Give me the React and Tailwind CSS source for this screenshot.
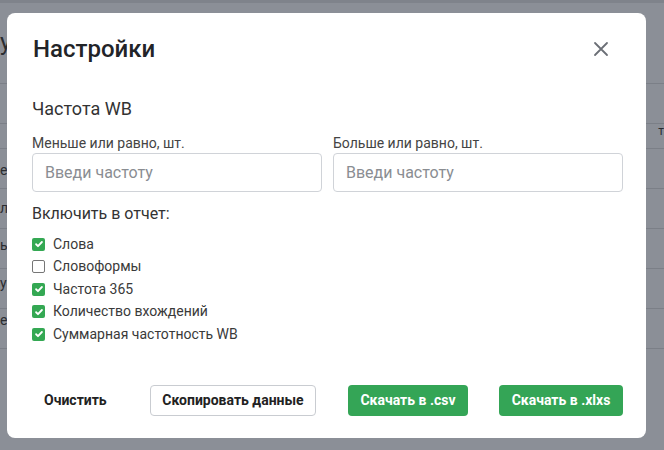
import React, { useState } from "react";

const rows = [
  { id: "words", label: "Слова", on: true },
  { id: "forms", label: "Словоформы", on: false },
  { id: "f365", label: "Частота 365", on: true },
  { id: "count", label: "Количество вхождений", on: true },
  { id: "sum", label: "Суммарная частотность WB", on: true },
];

function Check({ checked, onChange, label }) {
  return (
    <label className="flex items-center h-[22.5px] cursor-pointer">
      <span
        onClick={onChange}
        className={`w-[13px] h-[13px] rounded-[2px] flex items-center justify-center ${
          checked ? "bg-[#34a853]" : "border border-[#767676] bg-white"
        }`}
      >
        {checked && (
          <svg viewBox="0 0 12 12" className="w-[10px] h-[10px]" fill="none" stroke="white" strokeWidth="2.2" strokeLinecap="round" strokeLinejoin="round">
            <path d="M2.5 6.3l2.3 2.3 4.7-5" />
          </svg>
        )}
      </span>
      <span className="ml-[8px] text-[14px] text-[#3a3a3a]">{label}</span>
    </label>
  );
}

export default function App() {
  const [state, setState] = useState(rows.map((r) => r.on));

  return (
    <div className="relative w-[664px] h-[450px] overflow-hidden bg-[#8b8f97]" style={{ fontFamily: "Roboto, 'Noto Sans', sans-serif" }}>
      {/* page behind overlay */}
      <div className="absolute inset-x-0 top-0 h-[3px] bg-[#7f838b]" />
      <div className="absolute left-0 top-[30px] text-[24px] leading-none text-[#2a2c30]">у</div>
      {[0, 40, 65, 105, 145, 185, 225, 265].map((t, i) => (
        <div key={i} className="absolute left-0 right-0 h-px bg-[#7b7f87]" style={{ top: 83 + t }} />
      ))}
      <div className="absolute left-0 top-[163px] flex flex-col gap-[23.5px] text-[14px] leading-none text-[#2a2c30]">
        <span>е</span>
        <span>л</span>
        <span>ь</span>
        <span>у</span>
        <span>е</span>
      </div>
      <div className="absolute right-0 top-[125px] text-[12px] leading-none text-[#2a2c30]">т</div>

      {/* modal */}
      <div className="absolute left-[7px] top-[13px] w-[639px] h-[425px] bg-white rounded-[8px] pl-[25px] pr-[23px] pt-[22px]">
        <div className="flex items-center justify-between">
          <h2 className="text-[24px] font-medium text-[#222428] leading-[28px] pl-[1px]">Настройки</h2>
          <button className="w-[24px] h-[24px] mr-[10px] flex items-center justify-center text-[#6b6f76]">
            <svg viewBox="0 0 16 16" className="w-[16px] h-[16px]" fill="none" stroke="currentColor" strokeWidth="1.8" strokeLinecap="round">
              <path d="M2 2l12 12M14 2L2 14" />
            </svg>
          </button>
        </div>

        <div className="mt-[35px] text-[18px] text-[#333] leading-[22px]">Частота WB</div>

        <div className="mt-[14px] grid grid-cols-2 gap-[11px]">
          <div>
            <div className="text-[14px] text-[#444] leading-[18px] mb-[1px]">Меньше или равно, шт.</div>
            <input placeholder="Введи частоту" className="w-full h-[39px] border border-[#d0d3d8] rounded-[4px] px-[12px] text-[16px] placeholder:text-[#8a8d92] outline-none" />
          </div>
          <div>
            <div className="text-[14px] text-[#444] leading-[18px] mb-[1px]">Больше или равно, шт.</div>
            <input placeholder="Введи частоту" className="w-full h-[39px] border border-[#d0d3d8] rounded-[4px] px-[12px] text-[16px] placeholder:text-[#8a8d92] outline-none" />
          </div>
        </div>

        <div className="mt-[12px] text-[16px] text-[#333] leading-[20px]">Включить в отчет:</div>

        <div className="mt-[9px] flex flex-col">
          {rows.map((r, i) => (
            <Check
              key={r.id}
              label={r.label}
              checked={state[i]}
              onChange={() => setState((s) => s.map((v, j) => (j === i ? !v : v)))}
            />
          ))}
        </div>

        <div className="mt-[39px] flex items-center gap-[32px] text-[14px] font-bold">
          <button className="h-[31px] w-[86px] pl-[12px] text-left text-[#222]">Очистить</button>
          <button className="h-[31px] w-[166px] border border-[#c9ccd1] rounded-[4px] text-[#222]">Скопировать данные</button>
          <button className="h-[31px] w-[120px] bg-[#34a556] rounded-[4px] text-white">Скачать в .csv</button>
          <button className="h-[31px] w-[124px] ml-[-1px] bg-[#34a556] rounded-[4px] text-white">Скачать в .xlxs</button>
        </div>
      </div>
    </div>
  );
}
